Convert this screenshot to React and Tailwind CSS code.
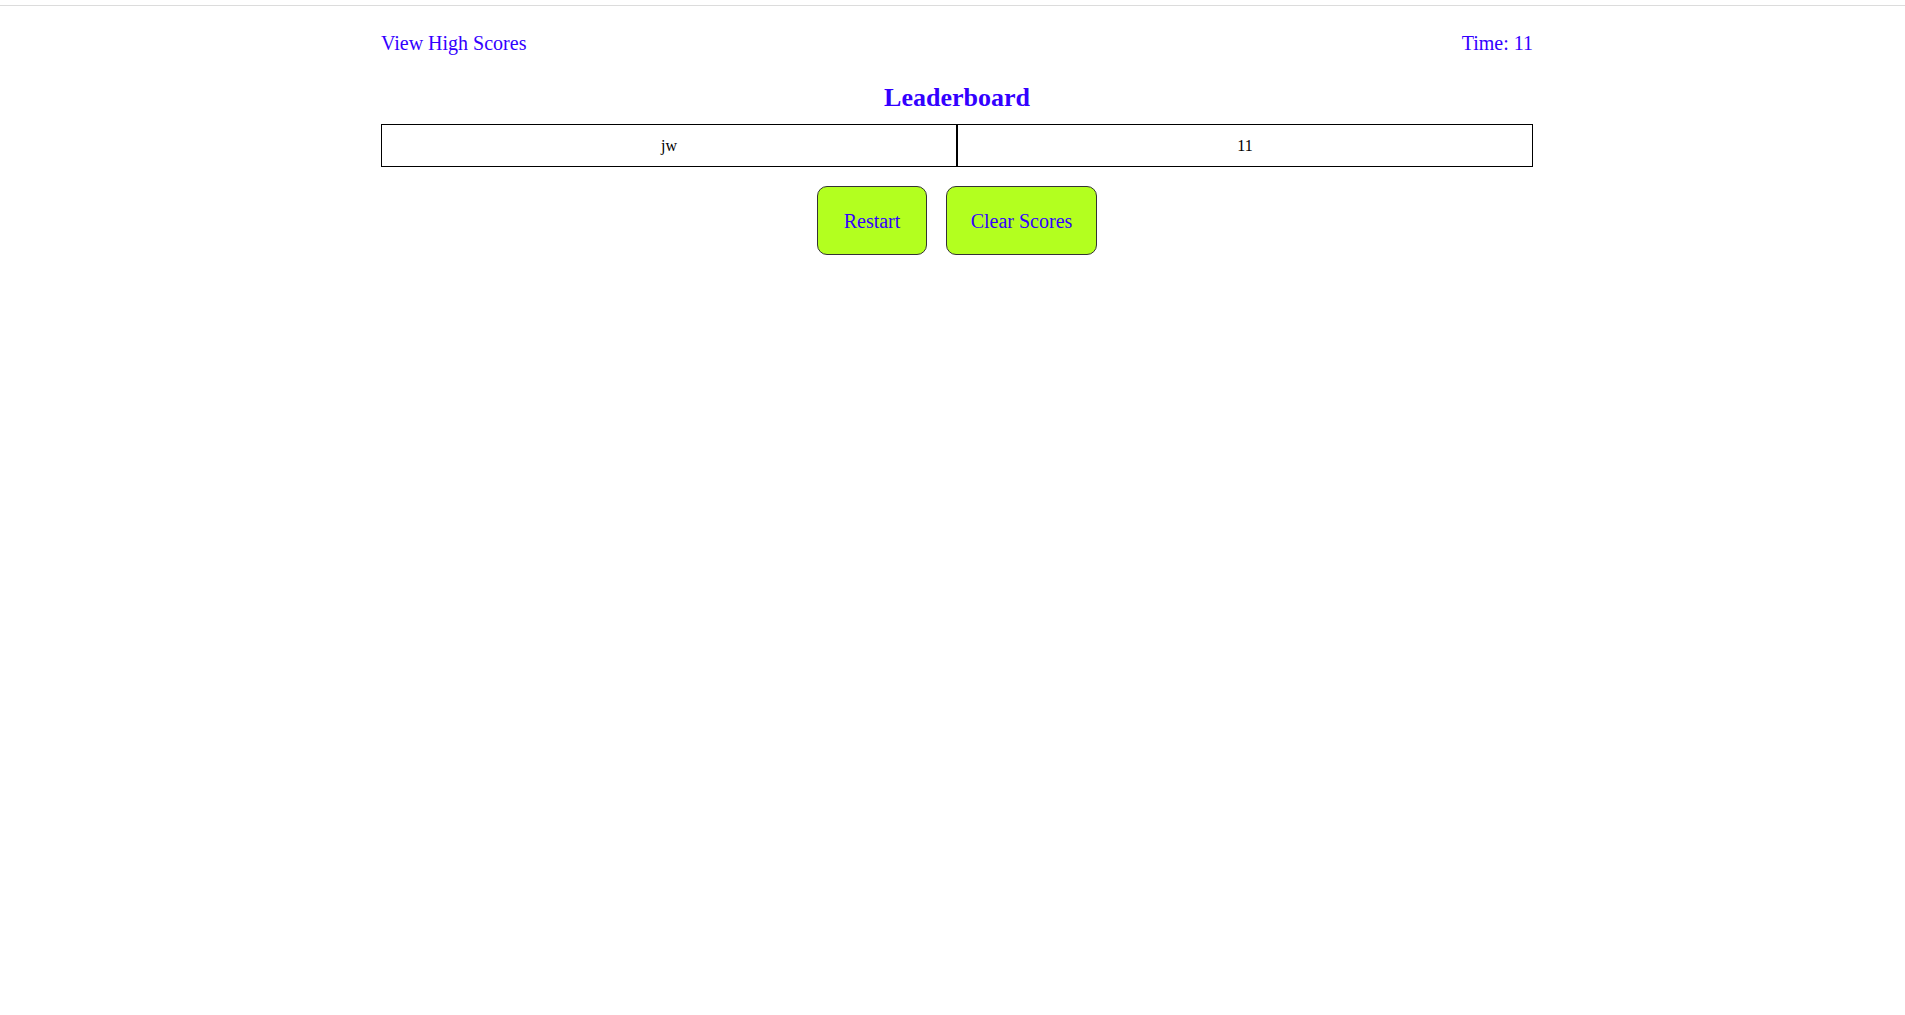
import React, { useState } from "react";

const serif = { fontFamily: '"Liberation Serif", "Times New Roman", serif' };

const App = () => {
  const [scores, setScores] = useState([{ name: "jw", score: 11 }]);
  const [time] = useState(11);

  return (
    <div className="min-h-screen bg-white" style={serif}>
      <div className="h-[5px]" />
      <div className="h-px bg-[#dcdcdc]" />
      <div className="ml-[381px] w-[1152px] pt-[26px]">
        <header className="flex items-center justify-between text-[20px] leading-[23px] text-[#3300ff]">
          <a href="#" className="cursor-pointer">View High Scores</a>
          <span>Time: {time}</span>
        </header>

        <h2 className="mt-[28px] text-center text-[26px] font-bold leading-[30px] text-[#3300ff]">
          Leaderboard
        </h2>

        <div className="mt-[11px]">
          {scores.map((s, i) => (
            <div key={i} className="flex text-[16px] text-black">
              <div className="flex h-[43px] flex-1 items-center justify-center border border-black">{s.name}</div>
              <div className="flex h-[43px] flex-1 items-center justify-center border border-black">{s.score}</div>
            </div>
          ))}
        </div>

        <div className="mt-[19px] flex justify-center gap-[19px]">
          <button className="h-[69px] w-[110px] rounded-[10px] border border-[#333] bg-[#b3ff1f] text-[20px] text-[#3300ff]">
            Restart
          </button>
          <button
            onClick={() => setScores([])}
            className="h-[69px] w-[151px] rounded-[10px] border border-[#333] bg-[#b3ff1f] text-[20px] text-[#3300ff]"
          >
            Clear Scores
          </button>
        </div>
      </div>
    </div>
  );
};

export default App;
